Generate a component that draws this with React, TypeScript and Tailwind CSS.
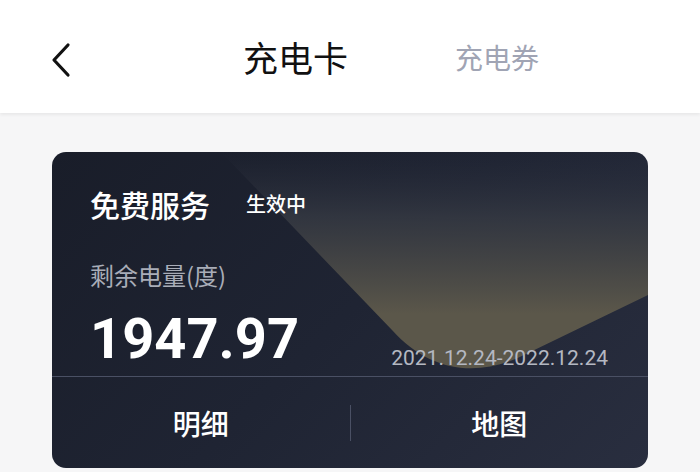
export default function App() {
  return (
    <div className="w-[700px] h-[472px] bg-[#f6f6f7] overflow-hidden font-['Noto_Sans_CJK_SC',sans-serif]">
      {/* header */}
      <div className="relative h-[113px] bg-white shadow-[0_2px_3px_rgba(0,0,0,0.06)] flex items-center">
        <div className="pl-[48px] pt-[6px]">
          <svg width="26" height="36" viewBox="0 0 26 36">
            <path d="M20 3 L6 18 L20 33" fill="none" stroke="#111" strokeWidth="3.2" strokeLinecap="round" strokeLinejoin="round" />
          </svg>
        </div>
        <div className="absolute left-[243px] top-[32px] text-[35px] leading-[50px] text-[#111]">充电卡</div>
        <div className="absolute left-[455px] top-[37px] text-[28px] leading-[40px] text-[#a0a4b4]">充电券</div>
      </div>

      {/* card */}
      <div className="px-[52px] pt-[39px]">
        <div className="relative h-[316px] rounded-[14px] overflow-hidden bg-[linear-gradient(135deg,#191d29_0%,#1f2433_50%,#292e3f_100%)]">
          <svg className="absolute inset-0" width="596" height="316" viewBox="0 0 596 316">
            <defs>
              <linearGradient id="g" x1="0" y1="0" x2="0" y2="1">
                <stop offset="0" stopColor="#2a2f3d" stopOpacity="0" />
                <stop offset="0.3" stopColor="#363a43" stopOpacity="0.8" />
                <stop offset="0.75" stopColor="#5b574a" stopOpacity="1" />
              </linearGradient>
            </defs>
            <path d="M169 0 L340 178 C378 220 425 226 472 203 L596 143 L596 0 Z" fill="url(#g)" />
          </svg>

          <div className="relative flex flex-col h-full">
            <div className="flex items-center pl-[38px] pt-[32px]">
              <span className="text-[30px] leading-[40px] text-white font-medium">免费服务</span>
              <span className="ml-[36px] text-[20px] leading-[30px] text-white font-medium">生效中</span>
            </div>
            <div className="pl-[38px] pt-[36px] text-[24px] leading-[30px] text-[#a9adb8]">剩余电量(度)</div>
            <div className="flex items-end justify-between pl-[38px] pr-[40px] mt-[21px] h-[56px]">
              <span className="font-['Roboto',sans-serif] font-bold text-[56px] leading-[56px] text-white">1947.97</span>
              <span className="font-['Roboto',sans-serif] text-[21px] leading-[26px] text-[#b4b8c2] mb-[-4px]">2021.12.24-2022.12.24</span>
            </div>
            <div className="mt-[9px] h-px bg-[#4a5064]" />
            <div className="flex flex-1 items-center">
              <div className="flex-1 text-center text-[28px] leading-[40px] text-white font-medium">明细</div>
              <div className="w-px h-[36px] bg-[#4a5064]" />
              <div className="flex-1 text-center text-[28px] leading-[40px] text-white font-medium">地图</div>
            </div>
          </div>
        </div>
      </div>
    </div>
  );
}
